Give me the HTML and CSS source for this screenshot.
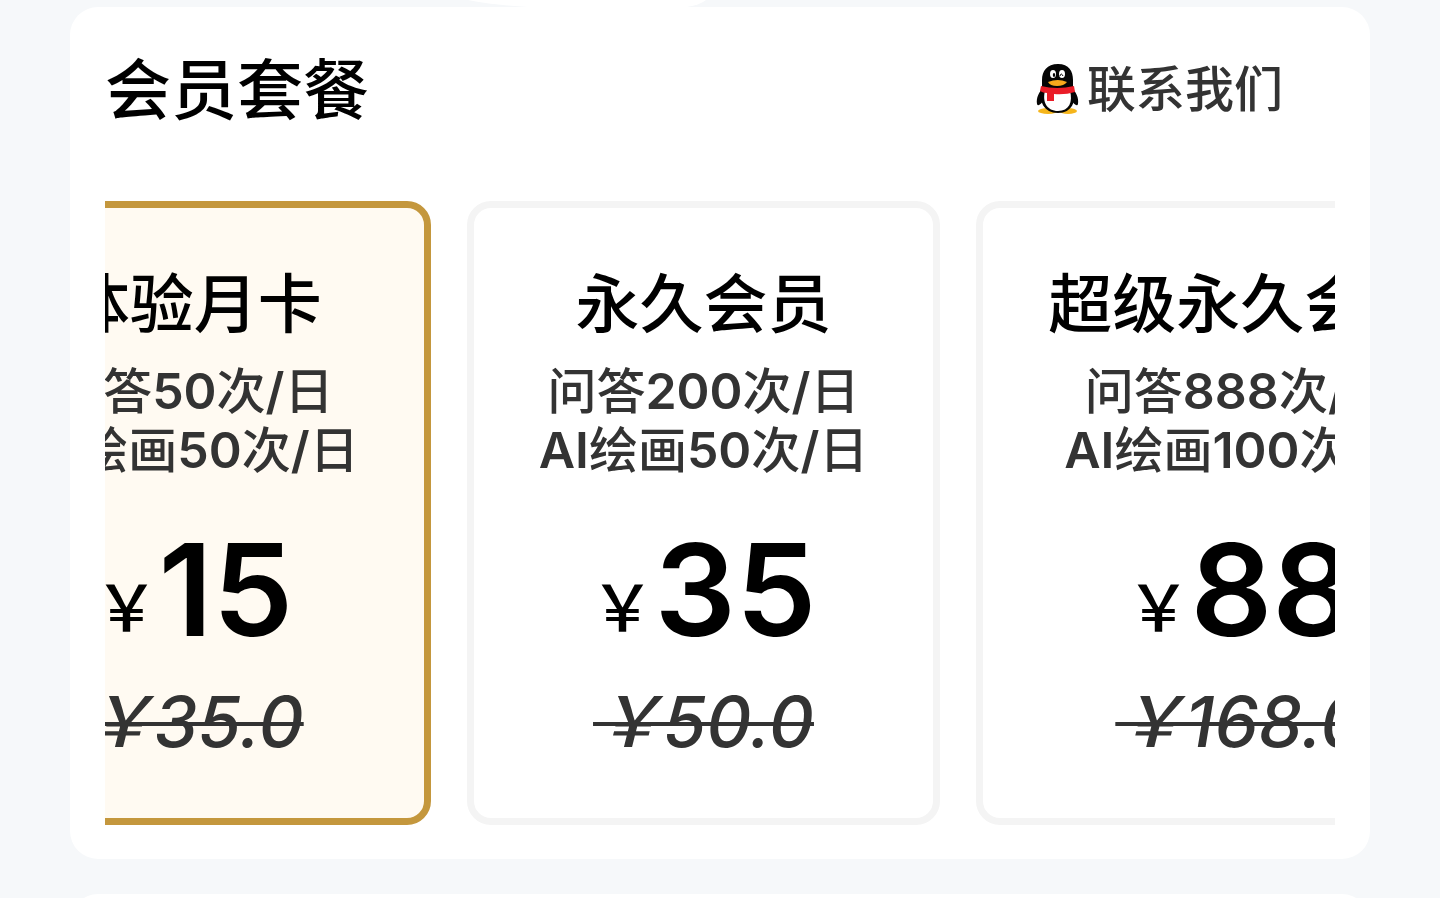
FILE: index.html
```html
<!DOCTYPE html>
<html lang="zh-CN">
<head>
<meta charset="utf-8">
<meta name="viewport" content="width=device-width, initial-scale=1">
<title>会员套餐</title>
<link rel="stylesheet" href="styles.css">
</head>
<body>
<div class="banner" aria-hidden="true">
  <svg class="banner-shape" viewBox="0 0 240 7"><path d="M24 0H262Q256 5 243 7H84Q48 5 24 0Z" fill="#fff"/></svg>
</div>
<main class="panel">
  <header class="panel-header">
    <h1 class="panel-title">会员套餐</h1>
    <a class="contact" href="#contact">
      <svg class="contact-icon" viewBox="0 0 44 52" aria-hidden="true">
        <ellipse cx="12" cy="47" rx="10" ry="3" fill="#f5b51b"/>
        <ellipse cx="32" cy="47" rx="9" ry="3" fill="#f5b51b"/>
        <path d="M7 24C3 28 0 34 1 40c1 3 4 0 7-4zM36 24c4 4 7 10 6 16-1 3-4 0-7-4z" fill="#050505"/>
        <path d="M22 0C11 0 6 7 6 16v8C2 37 8 49 22 49s19-12 15-25v-8C37 7 33 0 22 0Z" fill="#050505"/>
        <path d="M9 27C6 38 11 47 22 47s15-9 12-20Z" fill="#fff"/>
        <ellipse cx="17" cy="10" rx="3" ry="4" fill="#fff"/>
        <ellipse cx="26" cy="10" rx="3" ry="4" fill="#fff"/>
        <ellipse cx="18" cy="11" rx="1.200" ry="2" fill="#050505"/>
        <path d="M24 12q1-4 3 0" fill="none" stroke="#050505"/>
        <path d="M12 18q10-4 19 0-3 4-10 4t-9-4Z" fill="#f9a81c"/>
        <path d="M5 22q16 4 33 0l1 6q-10 3-21 2v7h-7v-8q-4 0-7-2Z" fill="#ea1c27"/>
      </svg>
      <span>联系我们</span>
    </a>
  </header>
  <div class="plans" id="plans">
    <button class="plan plan-selected" type="button">
      <span class="plan-name">体验月卡</span>
      <span class="plan-desc">问答<b>50</b>次<b>/</b>日<br><b>AI</b>绘画<b>50</b>次<b>/</b>日</span>
      <span class="price"><span class="currency">￥</span>15</span>
      <del class="old-price">￥35.0</del>
    </button>
    <button class="plan" type="button">
      <span class="plan-name">永久会员</span>
      <span class="plan-desc">问答<b>200</b>次<b>/</b>日<br><b>AI</b>绘画<b>50</b>次<b>/</b>日</span>
      <span class="price"><span class="currency">￥</span>35</span>
      <del class="old-price">￥50.0</del>
    </button>
    <button class="plan" type="button">
      <span class="plan-name">超级永久会员</span>
      <span class="plan-desc">问答<b>888</b>次<b>/</b>日<br><b>AI</b>绘画<b>100</b>次<b>/</b>日</span>
      <span class="price"><span class="currency">￥</span>88</span>
      <del class="old-price">￥168.0</del>
    </button>
  </div>
</main>
<section class="next-panel"></section>
<script src="script.js"></script>
</body>
</html>
```
FILE: styles.css
```css
* { box-sizing: border-box; }
body {
  margin: 0;
  min-height: 100vh;
  display: flex;
  flex-direction: column;
  background: #f6f8fa;
  color: #000;
  font-family: Inter, "Noto Sans CJK SC", sans-serif;
  font-weight: 500;
}
.banner { height: 7px; padding-left: 444px; }
.banner-shape { display: block; width: 240px; height: 7px; overflow: visible; }
.panel {
  margin: 0 70px;
  padding: 0 35px 34px;
  background: #fff;
  border-radius: 28px;
}
.panel-header {
  display: flex;
  align-items: center;
  justify-content: space-between;
  padding: 35px 52px 63px 0;
}
.panel-title { margin: 0; font-size: 66px; line-height: 96px; font-weight: 500; }
.contact {
  display: flex;
  align-items: center;
  gap: 7px;
  color: #333;
  font-size: 49px;
  line-height: 64px;
  text-decoration: none;
}
.contact-icon { width: 44px; height: 52px; }
.plans { display: flex; gap: 36px; overflow: hidden; }
.plan {
  flex: none;
  display: flex;
  flex-direction: column;
  align-items: center;
  padding: 56px 65px 60px;
  border: 7px solid #f4f4f4;
  border-radius: 24px;
  background: #fff;
  color: #000;
  font: inherit;
}
.plan-selected { border-color: #c4973d; background: #fffaf2; }
.plan-name { font-size: 64px; line-height: 80px; }
.plan-desc { margin-top: 18px; color: #333; font-size: 49px; line-height: 59px; }
.plan-desc b { font-size: 50px; line-height: 1; font-weight: 600; }
.price { margin-top: 46px; font-size: 128px; line-height: 128px; font-weight: 600; }
.currency { font-size: 64px; font-weight: 500; vertical-align: 5px; line-height: 1; }
.old-price {
  margin-top: 32px;
  overflow: hidden;
  color: #333;
  font-size: 70px;
  line-height: 72px;
  font-style: italic;
  text-decoration-thickness: 4px;
}
.next-panel {
  flex: 1 0 60px;
  margin: 35px 70px 0;
  background: #fff;
  border-radius: 28px 28px 0 0;
}
```
FILE: script.js
```js
const plans = document.getElementById('plans');
plans.scrollLeft = plans.children[1].offsetLeft - plans.offsetLeft - 362;
```
